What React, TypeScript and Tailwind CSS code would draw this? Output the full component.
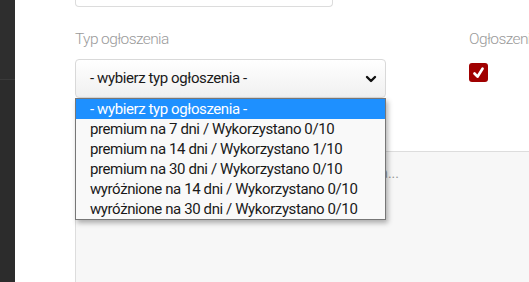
import React from 'react';

const options = [
  '- wybierz typ ogłoszenia -',
  'premium na 7 dni / Wykorzystano 0/10',
  'premium na 14 dni / Wykorzystano 1/10',
  'premium na 30 dni / Wykorzystano 0/10',
  'wyróżnione na 14 dni / Wykorzystano 0/10',
  'wyróżnione na 30 dni / Wykorzystano 0/10',
];

const App: React.FC = () => {
  return (
    <div className="flex h-[282px] w-[529px] overflow-hidden bg-white font-['Roboto',sans-serif]">
      {/* sidebar */}
      <div className="flex w-[15px] shrink-0 flex-col bg-[#2c2c2c]">
        <div className="h-[80px] border-b border-[#3a3a3a] bg-[#2e2e2e]"></div>
      </div>

      <div className="flex min-w-0 flex-1 flex-col pl-[60px]">
        {/* previous field, cut at top */}
        <div className="h-[7px] w-[258px] rounded-b border-x border-b border-[#dcdcdc] bg-white"></div>

        <div className="mt-[22px] flex">
          <div className="w-[311px] shrink-0">
            <div className="text-[15.5px] font-light leading-[20px] tracking-[-0.6px] text-[#9a9a9a]">Typ ogłoszenia</div>
            <div className="relative mt-[10px]">
              <div className="flex h-[39px] items-center justify-between rounded border border-[#d9d9d9] bg-gradient-to-b from-white to-[#f0f0f0] pl-[14px] pr-[8px] text-[15px] tracking-[-0.4px] text-[#1a1a1a]">
                <span>- wybierz typ ogłoszenia -</span>
                <svg width="12" height="8" viewBox="0 0 12 8">
                  <path d="M2 2l4 4 4-4" fill="none" stroke="#111" strokeWidth="2.4" strokeLinecap="round" strokeLinejoin="round" />
                </svg>
              </div>
              <div className="absolute left-0 top-[39px] z-10 w-[311px] border border-[#777] bg-[#f9f9f9] shadow-[2px_3px_5px_rgba(0,0,0,0.3)]">
                {options.map((o, i) => (
                  <div
                    key={o}
                    className={
                      i === 0
                        ? 'h-[20px] bg-[#1e90ff] pl-[14px] text-[15px] leading-[20px] tracking-[-0.4px] text-white'
                        : 'h-[20px] pl-[14px] text-[15px] leading-[20px] tracking-[-0.4px] text-[#1a1a1a]'
                    }
                  >
                    {o}
                  </div>
                ))}
              </div>
            </div>
          </div>

          <div className="ml-[83px] shrink-0">
            <div className="whitespace-nowrap text-[15.5px] font-light leading-[20px] tracking-[-0.6px] text-[#9a9a9a]">Ogłoszenie</div>
            <div className="mt-[14px] flex h-[19px] w-[19px] items-center justify-center rounded-[3px] bg-[#a00000]">
              <svg width="13" height="12" viewBox="0 0 13 12">
                <path d="M2.5 6.5l3 3.2 5-8" fill="none" stroke="#fff" strokeWidth="2.6" strokeLinecap="round" strokeLinejoin="round" />
              </svg>
            </div>
          </div>
        </div>

        {/* editor area behind the dropdown */}
        <div className="mt-[53px] flex-1 border-l border-t border-[#dddddd] bg-[#f7f7f7]">
          <div className="mt-[12px] flex w-[323px] justify-end text-[14px] leading-[18px] text-[#999]">
            Wpisz treść ogłoszenia...
          </div>
        </div>
      </div>
    </div>
  );
};

export default App;
